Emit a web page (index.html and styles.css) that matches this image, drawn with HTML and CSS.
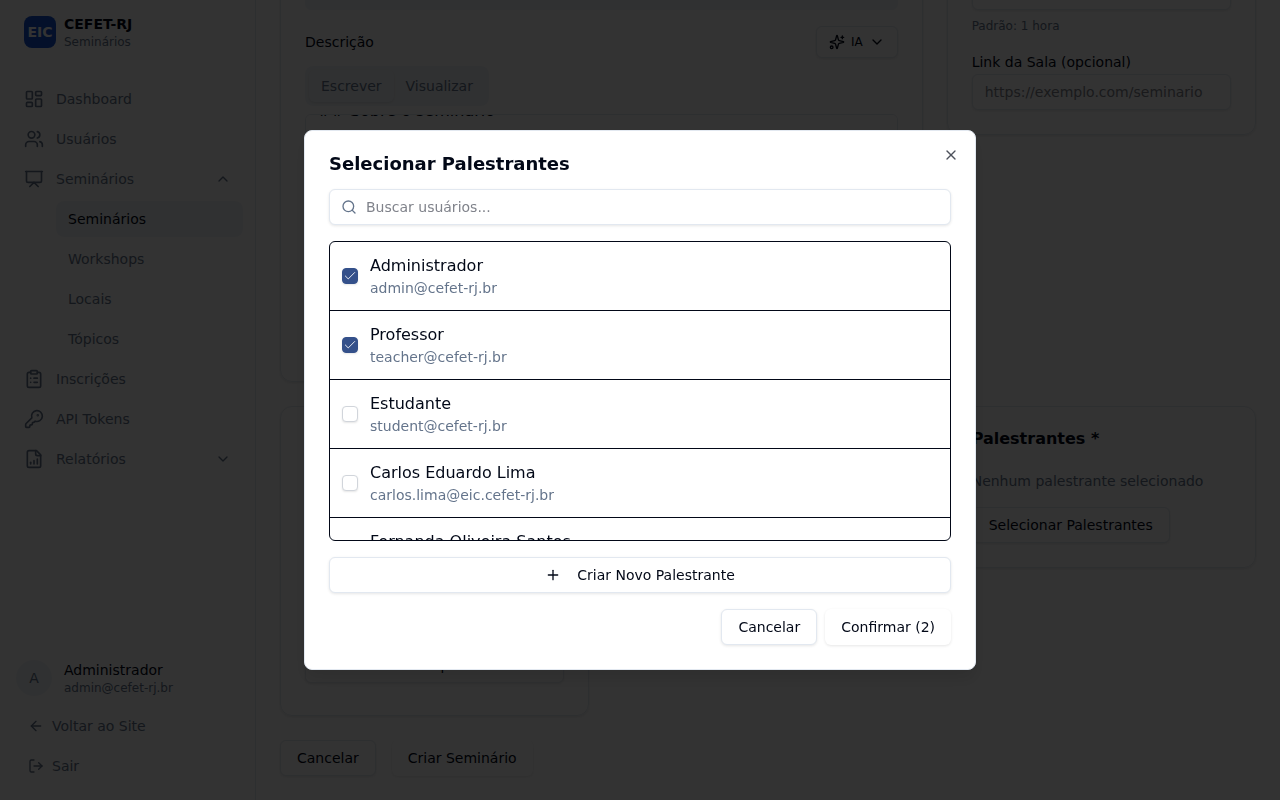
FILE: index.html
```html
<!DOCTYPE html>
<html lang="pt-BR">
<head>
    <meta charset="UTF-8">
    <meta name="viewport" content="width=device-width, initial-scale=1.0">
    <title>Criar Seminário - CEFET-RJ</title>
    <link rel="stylesheet" href="styles.css">
</head>
<body>
    <div class="layout">
        <aside class="sidebar">
            <a href="#" class="brand">
                <span class="brand-logo">EIC</span>
                <span class="brand-text">
                    <strong>CEFET-RJ</strong>
                    <small>Seminários</small>
                </span>
            </a>

            <nav class="nav">
                <a href="#" class="nav-item">
                    <svg class="icon icon-lg" viewBox="0 0 24 24"><rect width="7" height="9" x="3" y="3" rx="1"/><rect width="7" height="5" x="14" y="3" rx="1"/><rect width="7" height="9" x="14" y="12" rx="1"/><rect width="7" height="5" x="3" y="16" rx="1"/></svg>
                    <span>Dashboard</span>
                </a>
                <a href="#" class="nav-item">
                    <svg class="icon icon-lg" viewBox="0 0 24 24"><path d="M16 21v-2a4 4 0 0 0-4-4H6a4 4 0 0 0-4 4v2"/><circle cx="9" cy="7" r="4"/><path d="M22 21v-2a4 4 0 0 0-3-3.87"/><path d="M16 3.13a4 4 0 0 1 0 7.75"/></svg>
                    <span>Usuários</span>
                </a>
                <button type="button" class="nav-item" aria-expanded="true">
                    <svg class="icon icon-lg" viewBox="0 0 24 24"><path d="M2 3h20"/><path d="M21 3v11a2 2 0 0 1-2 2H5a2 2 0 0 1-2-2V3"/><path d="m7 21 5-5 5 5"/></svg>
                    <span>Seminários</span>
                    <svg class="icon chevron" viewBox="0 0 24 24"><path d="m18 15-6-6-6 6"/></svg>
                </button>
                <div class="subnav">
                    <a href="#" class="subnav-item active">Seminários</a>
                    <a href="#" class="subnav-item">Workshops</a>
                    <a href="#" class="subnav-item">Locais</a>
                    <a href="#" class="subnav-item">Tópicos</a>
                </div>
                <a href="#" class="nav-item">
                    <svg class="icon icon-lg" viewBox="0 0 24 24"><rect width="8" height="4" x="8" y="2" rx="1"/><path d="M16 4h2a2 2 0 0 1 2 2v14a2 2 0 0 1-2 2H6a2 2 0 0 1-2-2V6a2 2 0 0 1 2-2h2"/><path d="M12 11h4"/><path d="M12 16h4"/><path d="M8 11h.01"/><path d="M8 16h.01"/></svg>
                    <span>Inscrições</span>
                </a>
                <a href="#" class="nav-item">
                    <svg class="icon icon-lg" viewBox="0 0 24 24"><path d="M2.586 17.414A2 2 0 0 0 2 18.828V21a1 1 0 0 0 1 1h3a1 1 0 0 0 1-1v-1a1 1 0 0 1 1-1h1a1 1 0 0 0 1-1v-1a1 1 0 0 1 1-1h.172a2 2 0 0 0 1.414-.586l.814-.814a6.5 6.5 0 1 0-4-4z"/><circle cx="16.5" cy="7.5" r=".5" fill="currentColor"/></svg>
                    <span>API Tokens</span>
                </a>
                <button type="button" class="nav-item" aria-expanded="false">
                    <svg class="icon icon-lg" viewBox="0 0 24 24"><path d="M15 2H6a2 2 0 0 0-2 2v16a2 2 0 0 0 2 2h12a2 2 0 0 0 2-2V7z"/><path d="M14 2v4a2 2 0 0 0 2 2h4"/><path d="M8 18v-2"/><path d="M12 18v-4"/><path d="M16 18v-6"/></svg>
                    <span>Relatórios</span>
                    <svg class="icon chevron" viewBox="0 0 24 24"><path d="m6 9 6 6 6-6"/></svg>
                </button>
            </nav>

            <div class="sidebar-footer">
                <div class="user">
                    <span class="avatar">A</span>
                    <div class="user-text">
                        <strong>Administrador</strong>
                        <small>admin@cefet-rj.br</small>
                    </div>
                </div>
                <a href="#" class="footer-link">
                    <svg class="icon" viewBox="0 0 24 24"><path d="m12 19-7-7 7-7"/><path d="M19 12H5"/></svg>
                    Voltar ao Site
                </a>
                <button type="button" class="footer-link">
                    <svg class="icon" viewBox="0 0 24 24"><path d="M9 21H5a2 2 0 0 1-2-2V5a2 2 0 0 1 2-2h4"/><path d="m16 17 5-5-5-5"/><path d="M21 12H9"/></svg>
                    Sair
                </button>
            </div>
        </aside>

        <main class="main">
            <form class="form-grid">
                <section class="card card-wide">
                    <input type="text" class="input input-muted" aria-label="Nome">
                    <div class="editor-header">
                        <label for="description">Descrição</label>
                        <button type="button" class="btn btn-outline btn-sm">
                            <svg class="icon" viewBox="0 0 24 24"><path d="M9.937 15.5A2 2 0 0 0 8.5 14.063l-6.135-1.582a.5.5 0 0 1 0-.962L8.5 9.936A2 2 0 0 0 9.937 8.5l1.582-6.135a.5.5 0 0 1 .963 0L14.063 8.5A2 2 0 0 0 15.5 9.937l6.135 1.581a.5.5 0 0 1 0 .964L15.5 14.063a2 2 0 0 0-1.437 1.437l-1.582 6.135a.5.5 0 0 1-.963 0z"/><path d="M20 3v4"/><path d="M22 5h-4"/><circle cx="4" cy="20" r="2"/></svg>
                            IA
                            <svg class="icon" viewBox="0 0 24 24"><path d="m6 9 6 6 6-6"/></svg>
                        </button>
                    </div>
                    <div class="tabs">
                        <button type="button" class="tab tab-active">Escrever</button>
                        <button type="button" class="tab">Visualizar</button>
                    </div>
                    <textarea id="description" class="textarea">## Sobre o seminário

Descreva o tema do seminário.

## Objetivos

- Objetivo 1
- Objetivo 2

## Público-alvo

Alunos e professores.</textarea>
                </section>

                <section class="card">
                    <input type="text" class="input" id="duration" aria-label="Duração">
                    <p class="hint">Padrão: 1 hora</p>
                    <label class="field-label" for="room-link">Link da Sala (opcional)</label>
                    <input type="url" class="input" id="room-link" placeholder="https://exemplo.com/seminario">
                </section>

                <section class="card card-workshop">
                    <select class="input" aria-label="Workshop">
                        <option>Nenhum workshop</option>
                    </select>
                </section>

                <section class="card card-speakers">
                    <h2>Palestrantes *</h2>
                    <p class="empty">Nenhum palestrante selecionado</p>
                    <button type="button" class="btn btn-outline">Selecionar Palestrantes</button>
                </section>

                <div class="form-actions">
                    <button type="button" class="btn btn-outline">Cancelar</button>
                    <button type="submit" class="btn">Criar Seminário</button>
                </div>
            </form>
        </main>
    </div>

    <div class="overlay">
        <div class="modal" role="dialog" aria-modal="true" aria-labelledby="modal-title">
            <h2 id="modal-title">Selecionar Palestrantes</h2>
            <button type="button" class="modal-close" aria-label="Fechar">
                <svg class="icon" viewBox="0 0 24 24"><path d="M18 6 6 18"/><path d="m6 6 12 12"/></svg>
            </button>

            <div class="search">
                <svg class="icon search-icon" viewBox="0 0 24 24"><circle cx="11" cy="11" r="8"/><path d="m21 21-4.3-4.3"/></svg>
                <input type="text" class="input search-input" placeholder="Buscar usuários..." aria-label="Buscar usuários">
            </div>

            <div class="user-list">
                <label class="user-row">
                    <span class="check">
                        <input type="checkbox" checked>
                        <svg viewBox="0 0 24 24"><path d="M20 6 9 17l-5-5"/></svg>
                    </span>
                    <span class="user-info">
                        <span class="user-name">Administrador</span>
                        <span class="user-email">admin@cefet-rj.br</span>
                    </span>
                </label>
                <label class="user-row">
                    <span class="check">
                        <input type="checkbox" checked>
                        <svg viewBox="0 0 24 24"><path d="M20 6 9 17l-5-5"/></svg>
                    </span>
                    <span class="user-info">
                        <span class="user-name">Professor</span>
                        <span class="user-email">teacher@cefet-rj.br</span>
                    </span>
                </label>
                <label class="user-row">
                    <span class="check">
                        <input type="checkbox">
                        <svg viewBox="0 0 24 24"><path d="M20 6 9 17l-5-5"/></svg>
                    </span>
                    <span class="user-info">
                        <span class="user-name">Estudante</span>
                        <span class="user-email">student@cefet-rj.br</span>
                    </span>
                </label>
                <label class="user-row">
                    <span class="check">
                        <input type="checkbox">
                        <svg viewBox="0 0 24 24"><path d="M20 6 9 17l-5-5"/></svg>
                    </span>
                    <span class="user-info">
                        <span class="user-name">Carlos Eduardo Lima</span>
                        <span class="user-email">carlos.lima@eic.cefet-rj.br</span>
                    </span>
                </label>
                <label class="user-row">
                    <span class="check">
                        <input type="checkbox">
                        <svg viewBox="0 0 24 24"><path d="M20 6 9 17l-5-5"/></svg>
                    </span>
                    <span class="user-info">
                        <span class="user-name">Fernanda Oliveira Santos</span>
                        <span class="user-email">fernanda.santos@eic.cefet-rj.br</span>
                    </span>
                </label>
            </div>

            <button type="button" class="btn btn-outline">
                <svg class="icon" viewBox="0 0 24 24"><path d="M5 12h14"/><path d="M12 5v14"/></svg>
                Criar Novo Palestrante
            </button>

            <div class="modal-footer">
                <button type="button" class="btn btn-outline">Cancelar</button>
                <button type="button" class="btn">Confirmar (2)</button>
            </div>
        </div>
    </div>

    <script>
        document.getElementById("description").scrollTop = 24;
    </script>
</body>
</html>
```

FILE: styles.css
```css
* {
    box-sizing: border-box;
}
body {
    margin: 0;
    font-family: "DejaVu Sans", sans-serif;
    font-size: 14px;
    line-height: 20px;
    color: #020817;
    background: white;
}
a {
    color: inherit;
    text-decoration: none;
}
button, input, select, textarea {
    font: inherit;
    color: inherit;
}
button {
    cursor: pointer;
}
h2, p {
    margin: 0;
}
.icon {
    width: 16px;
    height: 16px;
    flex-shrink: 0;
    fill: none;
    stroke: currentColor;
    stroke-width: 2;
    stroke-linecap: round;
    stroke-linejoin: round;
}
.icon-lg {
    width: 20px;
    height: 20px;
}
.layout {
    display: flex;
    height: 100vh;
    overflow: hidden;
}

/* Sidebar */
.sidebar {
    display: flex;
    flex-direction: column;
    width: 256px;
    flex-shrink: 0;
    border-right: 1px solid #e2e8f0;
    color: #64748b;
}
.brand {
    display: flex;
    align-items: center;
    gap: 8px;
    padding: 14px 24px;
}
.brand-logo {
    display: flex;
    align-items: center;
    justify-content: center;
    width: 32px;
    height: 32px;
    border-radius: 8px;
    background: #1553cf;
    color: white;
    font-weight: bold;
}
.brand-text, .user-text {
    display: flex;
    flex-direction: column;
}
.brand-text strong {
    color: #020817;
}
small {
    font-size: 12px;
    line-height: 16px;
}
.nav {
    display: flex;
    flex-direction: column;
    gap: 4px;
    padding: 17px 12px;
}
.nav-item {
    display: flex;
    align-items: center;
    gap: 12px;
    height: 36px;
    padding: 0 12px;
    border: none;
    background: none;
}
.chevron {
    margin-left: auto;
}
.subnav {
    display: flex;
    flex-direction: column;
    gap: 4px;
    margin-left: 44px;
}
.subnav-item {
    padding: 8px 12px;
    border-radius: 8px;
}
.subnav-item.active {
    background: #f1f5f9;
    color: #020817;
}
.sidebar-footer {
    display: flex;
    flex-direction: column;
    gap: 4px;
    margin-top: auto;
    padding: 16px;
}
.user {
    display: flex;
    align-items: center;
    gap: 12px;
    margin-bottom: 8px;
}
.avatar {
    display: flex;
    align-items: center;
    justify-content: center;
    width: 36px;
    height: 36px;
    border-radius: 50%;
    background: #f1f5f9;
}
.user-text strong {
    color: #020817;
    font-weight: normal;
}
.footer-link {
    display: flex;
    align-items: center;
    gap: 8px;
    height: 36px;
    padding: 0 12px;
    border: none;
    background: none;
}

.main {
    display: flex;
    flex: 1;
    flex-direction: column;
    justify-content: flex-end;
    padding: 24px;
}
.form-grid {
    display: grid;
    grid-template-columns: repeat(3, 1fr);
    align-items: start;
    gap: 24px;
}
.card {
    display: flex;
    flex-direction: column;
    min-width: 0;
    padding: 24px;
    border: 1px solid #e2e8f0;
    border-radius: 12px;
    box-shadow: 0 1px 3px rgba(0, 0, 0, 0.1);
}
.card-wide {
    grid-column: span 2;
}
.input {
    width: 100%;
    height: 36px;
    padding: 4px 12px;
    border: 1px solid #e2e8f0;
    border-radius: 6px;
    background: white;
    box-shadow: 0 1px 3px rgba(0, 0, 0, 0.1);
    appearance: none;
}
.input::placeholder {
    color: #80838b;
    opacity: 1;
}
.input-muted {
    border-color: #f1f5f9;
    background: #f1f5f9;
    box-shadow: none;
}
.editor-header {
    display: flex;
    align-items: center;
    justify-content: space-between;
    margin: 16px 0 8px;
}
.tabs {
    display: flex;
    align-self: flex-start;
    padding: 4px;
    margin-bottom: 8px;
    border-radius: 8px;
    background: #f1f5f9;
}
.tab {
    height: 32px;
    padding: 0 12px;
    border: none;
    border-radius: 6px;
    background: none;
    color: #64748b;
}
.tab-active {
    box-shadow: 0 1px 3px rgba(0, 0, 0, 0.1);
}
.textarea {
    height: 243px;
    padding: 8px 12px;
    border: 1px solid #e2e8f0;
    border-radius: 6px;
    background: white;
    font-size: 16px;
    line-height: 24px;
    resize: none;
    scrollbar-width: none;
}
.hint {
    margin: 8px 0 20px;
    color: #64748b;
    font-size: 12px;
    line-height: 16px;
}
.field-label {
    margin-bottom: 4px;
    line-height: 16px;
}
.card-workshop {
    justify-content: flex-end;
    min-height: 310px;
    padding-bottom: 32px;
}
.card-speakers {
    grid-column: 3;
    align-items: flex-start;
}
.card-speakers h2 {
    font-size: 16px;
    line-height: 16px;
}
.empty {
    margin: 24px 0 16px;
    color: #64748b;
}
.form-actions {
    display: flex;
    grid-column: 1 / -1;
    gap: 16px;
}

/* Buttons */
.btn {
    display: inline-flex;
    align-items: center;
    justify-content: center;
    gap: 16px;
    height: 36px;
    padding: 0 16px;
    border: none;
    border-radius: 6px;
    background: white;
    box-shadow: 0 1px 3px rgba(0, 0, 0, 0.1);
    white-space: nowrap;
}
.btn-outline {
    border: 1px solid #e2e8f0;
}
.btn-sm {
    gap: 6px;
    height: 32px;
    padding: 0 12px;
    font-size: 12px;
}

/* Modal */
.overlay {
    position: fixed;
    inset: 0;
    display: flex;
    align-items: center;
    justify-content: center;
    background: rgba(0, 0, 0, 0.8);
}
.modal {
    position: relative;
    display: flex;
    flex-direction: column;
    gap: 16px;
    width: 100%;
    max-width: 672px;
    padding: 24px;
    border: 1px solid #e2e8f0;
    border-radius: 8px;
    background: white;
    box-shadow: 0 10px 15px rgba(0, 0, 0, 0.1);
}
.modal h2 {
    font-size: 18px;
    line-height: 18px;
}
.modal-close {
    position: absolute;
    top: 16px;
    right: 16px;
    display: flex;
    padding: 0;
    border: none;
    background: none;
    opacity: 0.7;
}
.search {
    position: relative;
    display: flex;
}
.search-icon {
    position: absolute;
    top: 10px;
    left: 12px;
    color: #64748b;
}
.search-input {
    padding-left: 36px;
}
.user-list {
    height: 300px;
    overflow-y: auto;
    border: 1px solid #020817;
    border-radius: 6px;
    scrollbar-width: none;
}
.user-row {
    display: flex;
    align-items: center;
    gap: 12px;
    padding: 12px;
    cursor: pointer;
}
.user-row + .user-row {
    border-top: 1px solid #020817;
}
.user-info {
    display: flex;
    flex-direction: column;
}
.user-name {
    font-size: 16px;
    line-height: 24px;
}
.user-email {
    color: #64748b;
}
.check {
    display: grid;
    place-items: center;
    width: 16px;
    height: 16px;
}
.check input {
    grid-area: 1 / 1;
    width: 16px;
    height: 16px;
    margin: 0;
    border: 1px solid #d1d5db;
    border-radius: 4px;
    background: white;
    box-shadow: 0 1px 2px rgba(0, 0, 0, 0.1);
    appearance: none;
}
.check input:checked {
    border-color: #34508a;
    background: #34508a;
}
.check svg {
    grid-area: 1 / 1;
    z-index: 1;
    width: 14px;
    height: 14px;
    fill: none;
    stroke: white;
    stroke-width: 1.5;
    stroke-linecap: round;
    stroke-linejoin: round;
    pointer-events: none;
}
.modal-footer {
    display: flex;
    justify-content: flex-end;
    gap: 8px;
}
```
